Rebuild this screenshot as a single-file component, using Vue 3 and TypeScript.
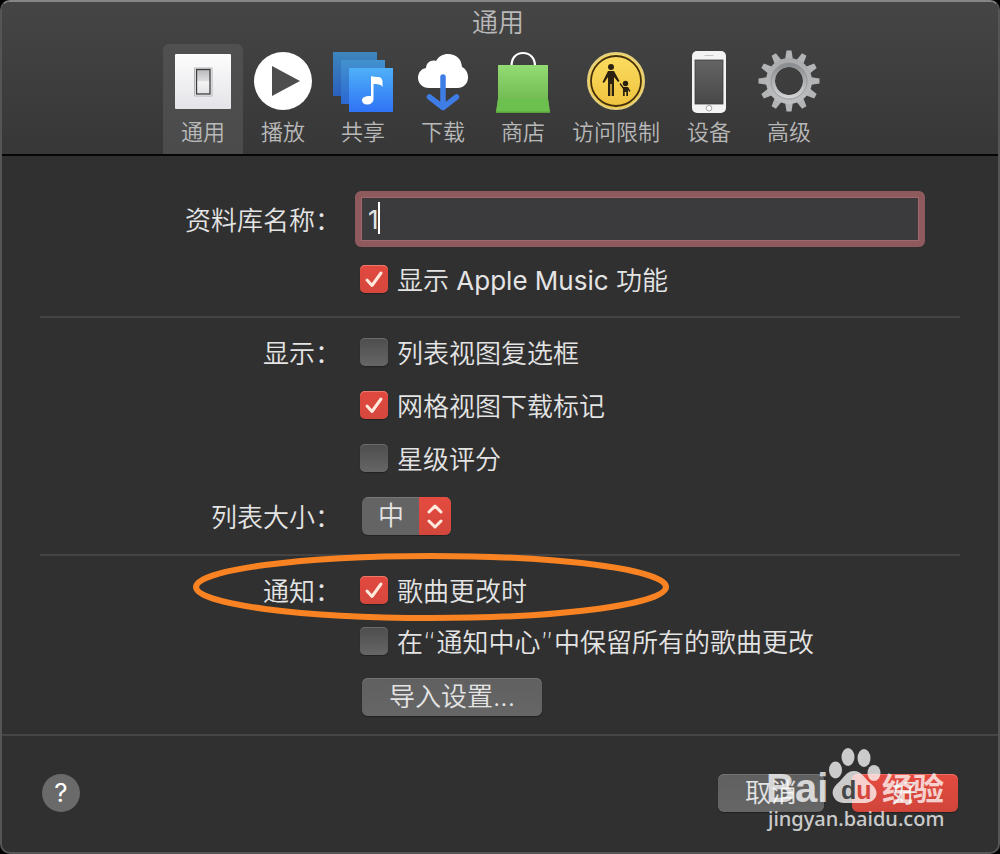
<script setup lang="ts">
import { reactive, ref } from 'vue'

type TabId = 'general' | 'playback' | 'sharing' | 'downloads' | 'store' | 'restrictions' | 'devices' | 'advanced'

const tabs: { id: TabId; label: string }[] = [
  { id: 'general', label: '通用' },
  { id: 'playback', label: '播放' },
  { id: 'sharing', label: '共享' },
  { id: 'downloads', label: '下载' },
  { id: 'store', label: '商店' },
  { id: 'restrictions', label: '访问限制' },
  { id: 'devices', label: '设备' },
  { id: 'advanced', label: '高级' },
]

const active = ref<TabId>('general')
const libraryName = ref('1')
const listSize = ref('中')
const options = reactive({
  appleMusic: true,
  listCheckboxes: false,
  gridBadges: true,
  starRatings: false,
  songChange: true,
  keepInCenter: false,
})
const teeth = Array.from({ length: 12 }, (_, i) => i * 30)
</script>

<template>
  <main class="window">
    <header class="toolbar">
      <h1 class="title">通用</h1>
      <nav class="tabs">
        <button
          v-for="tab in tabs"
          :key="tab.id"
          type="button"
          class="tab"
          :class="{ selected: active === tab.id }"
          @click="active = tab.id"
        >
          <svg class="tab-icon" viewBox="0 0 64 64" aria-hidden="true">
            <template v-if="tab.id === 'general'">
              <defs>
                <linearGradient id="plate" x1="0" y1="0" x2="0" y2="1">
                  <stop offset="0" stop-color="#fdfdfd" />
                  <stop offset="1" stop-color="#e4e4e8" />
                </linearGradient>
                <linearGradient id="rocker" x1="0" y1="0" x2="0" y2="1">
                  <stop offset="0" stop-color="#b9b9bb" />
                  <stop offset="0.45" stop-color="#dcdcde" />
                  <stop offset="0.5" stop-color="#f4f4f5" />
                  <stop offset="1" stop-color="#e2e2e4" />
                </linearGradient>
              </defs>
              <rect x="4" y="4" width="56" height="55" rx="1" fill="url(#plate)" />
              <rect x="23" y="17.5" width="18.5" height="29" rx="1" fill="#b4b4b8" />
              <rect x="24" y="18.5" width="16.5" height="27" fill="#f6f6f6" />
              <rect x="25.5" y="19.5" width="13.5" height="24.5" fill="url(#rocker)" stroke="#3b3b3d" stroke-width="1.3" />
            </template>
            <template v-else-if="tab.id === 'playback'">
              <circle cx="32" cy="31" r="29" fill="#fff" />
              <path d="M21 16 49 31 21 46Z" fill="#4d4d4d" />
            </template>
            <template v-else-if="tab.id === 'sharing'">
              <defs>
                <linearGradient id="backA" x1="0" y1="0" x2="0" y2="1">
                  <stop offset="0" stop-color="#3d86bd" />
                  <stop offset="1" stop-color="#2a60bd" />
                </linearGradient>
                <linearGradient id="backB" x1="0" y1="0" x2="0" y2="1">
                  <stop offset="0" stop-color="#4391cf" />
                  <stop offset="1" stop-color="#2c68d2" />
                </linearGradient>
                <linearGradient id="front" x1="0" y1="0" x2="0" y2="1">
                  <stop offset="0" stop-color="#4fb0f8" />
                  <stop offset="1" stop-color="#2f73f5" />
                </linearGradient>
              </defs>
              <rect x="2" y="2" width="44" height="44" fill="url(#backA)" />
              <rect x="10" y="10" width="44" height="44" fill="url(#backB)" />
              <rect x="18" y="18" width="44" height="44" fill="url(#front)" />
              <path d="M40 26C44 28 51 25 51.500 31V37C50 34 46 34 42.500 34V49C42.500 52.500 39.500 54.500 36 54.500C33 54.500 31 52.800 31 50.500C31 47.500 34 45.800 40 46Z" fill="#fff" />
            </template>
            <template v-else-if="tab.id === 'downloads'">
              <path d="M18 38C11.500 38 7 33.500 7 27.800C7 22.500 10.500 18.800 15 18C15.500 12.500 20 9.500 25 11C27.500 6.500 32 4 37 4C45 4 50.500 9 51 17C55 19 57 23 57 27.500C57 33.500 52.500 38 46.500 38Z" fill="#fff" />
              <path d="M32 27V57M18.500 47 32 57.500 45.500 47" fill="none" stroke="#3e7de6" stroke-width="5.5" stroke-linecap="round" stroke-linejoin="round" />
            </template>
            <template v-else-if="tab.id === 'store'">
              <defs>
                <linearGradient id="bag" x1="0" y1="0" x2="0" y2="1">
                  <stop offset="0" stop-color="#93dc74" />
                  <stop offset="1" stop-color="#65b046" />
                </linearGradient>
              </defs>
              <path d="M20.500 16C20.500 8 25 3 32 3S44 8 44 16" fill="none" stroke="#fff" stroke-width="2.2" />
              <path d="M7 15H57V49L59 62.500H5L7 49Z" fill="url(#bag)" />
              <path d="M7 49H57L59 62.500H5Z" fill="#6cc04d" />
              <path d="M5 62H59" stroke="#59a53d" />
            </template>
            <template v-else-if="tab.id === 'restrictions'">
              <defs>
                <linearGradient id="coin" x1="0" y1="0" x2="0" y2="1">
                  <stop offset="0" stop-color="#fbdd62" />
                  <stop offset="1" stop-color="#f0c23c" />
                </linearGradient>
              </defs>
              <circle cx="32" cy="31" r="28" fill="url(#coin)" stroke="#e3cf7c" stroke-width="2" />
              <circle cx="32" cy="31" r="25" fill="none" stroke="#43300f" stroke-width="1.8" />
              <g fill="#2b2110">
                <circle cx="27" cy="17" r="3" />
                <path d="M24 21H30L35.500 31 34 32 30 27V46H27.700V34H26.300V46H24V27L20 33 18.500 32Z" />
                <circle cx="41.5" cy="33.5" r="2.7" />
                <path d="M36.500 33 39.500 37H44L46.500 41 45.500 42 44 40V46H42.300V42H40.700V46H39V39L35.500 34Z" />
              </g>
            </template>
            <template v-else-if="tab.id === 'devices'">
              <defs>
                <linearGradient id="screen" x1="0" y1="0" x2="0" y2="1">
                  <stop offset="0" stop-color="#646464" />
                  <stop offset="1" stop-color="#484848" />
                </linearGradient>
              </defs>
              <rect x="15" y="1" width="34" height="62" rx="5" fill="#f3f3f3" />
              <rect x="18" y="10" width="28" height="44" fill="url(#screen)" stroke="#3e3e3e" stroke-width="0.8" />
              <path d="M28 5.500H36" stroke="#c5c5c5" stroke-width="1.2" stroke-linecap="round" />
              <circle cx="32" cy="58.2" r="2.8" fill="#fff" stroke="#a5a5a5" />
            </template>
            <template v-else>
              <defs>
                <linearGradient id="gear" gradientUnits="userSpaceOnUse" x1="0" y1="0" x2="0" y2="62">
                  <stop offset="0" stop-color="#a5a7a9" />
                  <stop offset="1" stop-color="#c0c2c4" />
                </linearGradient>
                <linearGradient id="hub" x1="0" y1="0" x2="0" y2="1">
                  <stop offset="0" stop-color="#8b8e91" />
                  <stop offset="1" stop-color="#d0d2d4" />
                </linearGradient>
              </defs>
              <path v-for="angle in teeth" :key="angle" d="M29.500 0.500H34.500L36 10H28Z" fill="#b2b4b6" :transform="`rotate(${angle} 32 31)`" />
              <circle cx="32" cy="31" r="18.5" fill="none" stroke="url(#gear)" stroke-width="9" />
              <circle cx="32" cy="31" r="16" fill="none" stroke="url(#hub)" stroke-width="4" />
              <circle cx="32" cy="31" r="18" fill="none" stroke="#8f9193" stroke-width="0.8" />
            </template>
          </svg>
          <span class="tab-label">{{ tab.label }}</span>
        </button>
      </nav>
    </header>

    <form class="panel" @submit.prevent>
      <section class="group">
        <div class="row">
          <label class="caption" for="library">资料库名称：</label>
          <div class="field">
            <input id="library" v-model="libraryName" class="text-box" type="text" autocomplete="off" />
            <span class="caret"></span>
          </div>
        </div>
        <div class="row first-option">
          <label class="option">
            <span class="tick"><input v-model="options.appleMusic" type="checkbox" /><svg viewBox="0 0 28 28" aria-hidden="true"><path d="M7 15 12 20.500 21 8" /></svg></span>
            <span class="option-text">显示 <span class="latin">Apple Music</span> 功能</span>
          </label>
        </div>
      </section>

      <section class="group display">
        <div class="row">
          <span class="caption">显示：</span>
          <label class="option">
            <span class="tick"><input v-model="options.listCheckboxes" type="checkbox" /><svg viewBox="0 0 28 28" aria-hidden="true"><path d="M7 15 12 20.500 21 8" /></svg></span>
            <span class="option-text">列表视图复选框</span>
          </label>
        </div>
        <div class="row">
          <label class="option">
            <span class="tick"><input v-model="options.gridBadges" type="checkbox" /><svg viewBox="0 0 28 28" aria-hidden="true"><path d="M7 15 12 20.500 21 8" /></svg></span>
            <span class="option-text">网格视图下载标记</span>
          </label>
        </div>
        <div class="row">
          <label class="option">
            <span class="tick"><input v-model="options.starRatings" type="checkbox" /><svg viewBox="0 0 28 28" aria-hidden="true"><path d="M7 15 12 20.500 21 8" /></svg></span>
            <span class="option-text">星级评分</span>
          </label>
        </div>
        <div class="row">
          <label class="caption" for="list-size">列表大小：</label>
          <div class="picker">
            <select id="list-size" v-model="listSize">
              <option>小</option>
              <option>中</option>
              <option>大</option>
            </select>
            <svg class="stepper" viewBox="0 0 32 38" aria-hidden="true"><path d="M10 15 16 9 22 15M10 24 16 30 22 24" /></svg>
          </div>
        </div>
      </section>

      <section class="group notices">
        <div class="row">
          <span class="caption">通知：</span>
          <label class="option">
            <span class="tick"><input v-model="options.songChange" type="checkbox" /><svg viewBox="0 0 28 28" aria-hidden="true"><path d="M7 15 12 20.500 21 8" /></svg></span>
            <span class="option-text">歌曲更改时</span>
          </label>
          <svg class="highlight" viewBox="0 0 480 72" aria-hidden="true"><ellipse cx="240" cy="36" rx="235" ry="31" /></svg>
        </div>
        <div class="row">
          <label class="option">
            <span class="tick"><input v-model="options.keepInCenter" type="checkbox" /><svg viewBox="0 0 28 28" aria-hidden="true"><path d="M7 15 12 20.500 21 8" /></svg></span>
            <span class="option-text">在<span class="quote">“</span>通知中心<span class="quote">”</span>中保留所有的歌曲更改</span>
          </label>
        </div>
        <div class="row">
          <button type="button" class="push import">导入设置...</button>
        </div>
      </section>
    </form>

    <footer class="footer">
      <button type="button" class="help" aria-label="帮助">?</button>
      <div class="actions">
        <button type="button" class="push">取消</button>
        <button type="button" class="push primary">好</button>
      </div>
    </footer>

    <svg class="watermark" viewBox="0 0 200 100">
      <g class="mark">
        <text x="6" y="62" class="brand">Bai</text>
        <ellipse cx="75.5" cy="30" rx="6.5" ry="8.5" />
        <ellipse cx="88" cy="17" rx="6.5" ry="9" />
        <ellipse cx="104" cy="18" rx="6.5" ry="9" />
        <ellipse cx="114" cy="33" rx="6.5" ry="8" />
        <path d="M94 31C102 31 104 38 110 43C117 48 118 54 115 58C111 64 103 63 95 63C86 63 79 64 75 59C71 54 72 48 78 43C84 38 86 31 94 31Z" />
        <text x="122" y="60" class="brand-cjk">经验</text>
        <text x="8" y="86" class="site">jingyan.baidu.com</text>
      </g>
      <text x="81" y="59" class="du"><tspan fill="#454545">d</tspan><tspan fill="#d5463c">u</tspan></text>
    </svg>
  </main>
</template>

<style>
body {
  background: #000;
}
</style>

<style scoped>
.window {
  position: relative;
  box-sizing: border-box;
  min-height: 100vh;
  border: 2px solid #555;
  border-top-color: #858585;
  border-radius: 10px;
  background: #303030;
  color: #e4e4e4;
  font-family: Inter, "Noto Sans CJK SC", sans-serif;
  font-size: 26px;
  font-weight: 350;
  line-height: 28px;
  overflow: hidden;
}

button,
input,
select {
  margin: 0;
  font: inherit;
  color: inherit;
}

.toolbar {
  padding-right: 4px;
  border-bottom: 2px solid #060606;
  background: linear-gradient(#454545, #373737);
  color: #b9b9b9;
}

.title {
  margin: 0;
  font-size: 26px;
  font-weight: 350;
  line-height: 42px;
  text-align: center;
}

.tabs {
  display: flex;
  justify-content: center;
  padding-right: 4px;
}

.tab {
  display: flex;
  flex-direction: column;
  align-items: center;
  gap: 3px;
  min-width: 80px;
  padding: 6px 9px 7px;
  border: 0;
  border-radius: 6px 6px 0 0;
  background: none;
}

.tab.selected {
  background: linear-gradient(#505050, #4b4b4b);
}

.tab-icon {
  width: 64px;
  height: 64px;
  margin: 0 -1px;
}

.tab-label {
  font-size: 22px;
  line-height: 30px;
  white-space: nowrap;
}

.group {
  display: flex;
  flex-direction: column;
  margin: 0 38px;
  padding: 35px 0 23px;
}

.group + .group {
  border-top: 2px solid #444;
  padding: 20px 0 18px;
}

.group.display {
  gap: 25px;
  padding-bottom: 19px;
}

.notices {
  gap: 23px;
}

.row {
  position: relative;
  display: grid;
  grid-template-columns: 301px 1fr;
  column-gap: 19px;
  align-items: center;
}

.first-option {
  margin-top: 18px;
}

.caption,
.option-text {
  padding-top: 4px;
  line-height: 24px;
  white-space: nowrap;
}

.caption {
  grid-column: 1;
  text-align: right;
}

.latin {
  font-weight: 400;
}

.quote {
  font-family: "DejaVu Sans", sans-serif;
}

.option,
.picker,
.import {
  grid-column: 2;
  justify-self: start;
}

.option {
  display: flex;
  align-items: center;
  gap: 9px;
}

.field {
  position: relative;
  display: flex;
  margin: 0 35px 0 -5px;
}

.text-box {
  flex: 1;
  box-sizing: border-box;
  min-width: 0;
  height: 56px;
  padding: 0 7px;
  border: 6px solid #8e5a5e;
  border-radius: 6px;
  background: #3b3b3d;
  box-shadow: inset 0 0 0 1px #a0686a;
  outline: none;
  font-weight: 400;
}

.caret {
  position: absolute;
  left: 23px;
  top: 11px;
  width: 2px;
  height: 32px;
  background: #fff;
}

.tick {
  display: grid;
  width: 28px;
  height: 28px;
}

.tick input,
.tick svg {
  grid-area: 1 / 1;
  width: 28px;
  height: 28px;
}

.tick input {
  appearance: none;
  border-radius: 5px;
  background: linear-gradient(#4d4d4d, #666);
  box-shadow: inset 0 1px 0 #6b6b6b, 0 1px 1px #222;
}

.tick input:checked {
  background: linear-gradient(#e2493f, #d5473d);
  box-shadow: inset 0 1px 0 #ee776b, 0 1px 1px #222;
}

.tick svg {
  display: none;
  pointer-events: none;
}

.tick input:checked + svg {
  display: block;
}

.tick path,
.stepper path {
  fill: none;
  stroke: #ffe9dc;
  stroke-width: 3;
  stroke-linecap: round;
  stroke-linejoin: round;
}

.picker {
  display: grid;
  margin-left: 2px;
  border-radius: 6px;
  box-shadow: 0 1px 1px #222;
  overflow: hidden;
}

.picker select,
.stepper {
  grid-area: 1 / 1;
}

.picker select {
  appearance: none;
  box-sizing: border-box;
  height: 38px;
  width: 89px;
  padding: 0 48px 0 16px;
  border: 0;
  background: #646464;
  box-shadow: inset 0 1px 0 #777;
}

.picker option {
  background: #646464;
}

.stepper {
  justify-self: end;
  width: 32px;
  height: 38px;
  background: linear-gradient(#e54b40, #d3463b);
  pointer-events: none;
}

.highlight {
  position: absolute;
  left: 151px;
  top: -25px;
  width: 480px;
  height: 72px;
  pointer-events: none;
}

.highlight ellipse {
  fill: none;
  stroke: #f98322;
  stroke-width: 6;
}

.push {
  min-width: 106px;
  height: 38px;
  padding: 0 26px;
  border: 0;
  border-radius: 6px;
  background: linear-gradient(#606060, #666);
  box-shadow: inset 0 1px 0 #747474, 0 1px 1px #222;
}

.import {
  margin-left: 2px;
  min-width: 180px;
}

.primary {
  background: linear-gradient(#e54b40, #d0453a);
  box-shadow: inset 0 1px 0 #ee6d62, 0 1px 1px #222;
}

.footer {
  display: flex;
  align-items: center;
  justify-content: space-between;
  padding: 38px 40px;
  border-top: 2px solid #464646;
}

.help {
  width: 38px;
  height: 38px;
  padding: 0;
  border: 0;
  border-radius: 50%;
  background: #6a6a6a;
  color: #fff;
  font-weight: 400;
}

.actions {
  display: flex;
  gap: 28px;
}

.watermark {
  position: absolute;
  right: 38px;
  bottom: 12px;
  width: 200px;
  height: 100px;
  pointer-events: none;
}

.mark {
  fill: #fff;
  opacity: 0.75;
}

.brand {
  font: 700 40px "Liberation Sans", sans-serif;
}

.brand-cjk {
  font: 700 31px "Noto Sans CJK SC", sans-serif;
}

.site {
  font: 500 20px "Noto Sans", sans-serif;
}

.du {
  font: 700 25px "Liberation Sans", sans-serif;
}
</style>
